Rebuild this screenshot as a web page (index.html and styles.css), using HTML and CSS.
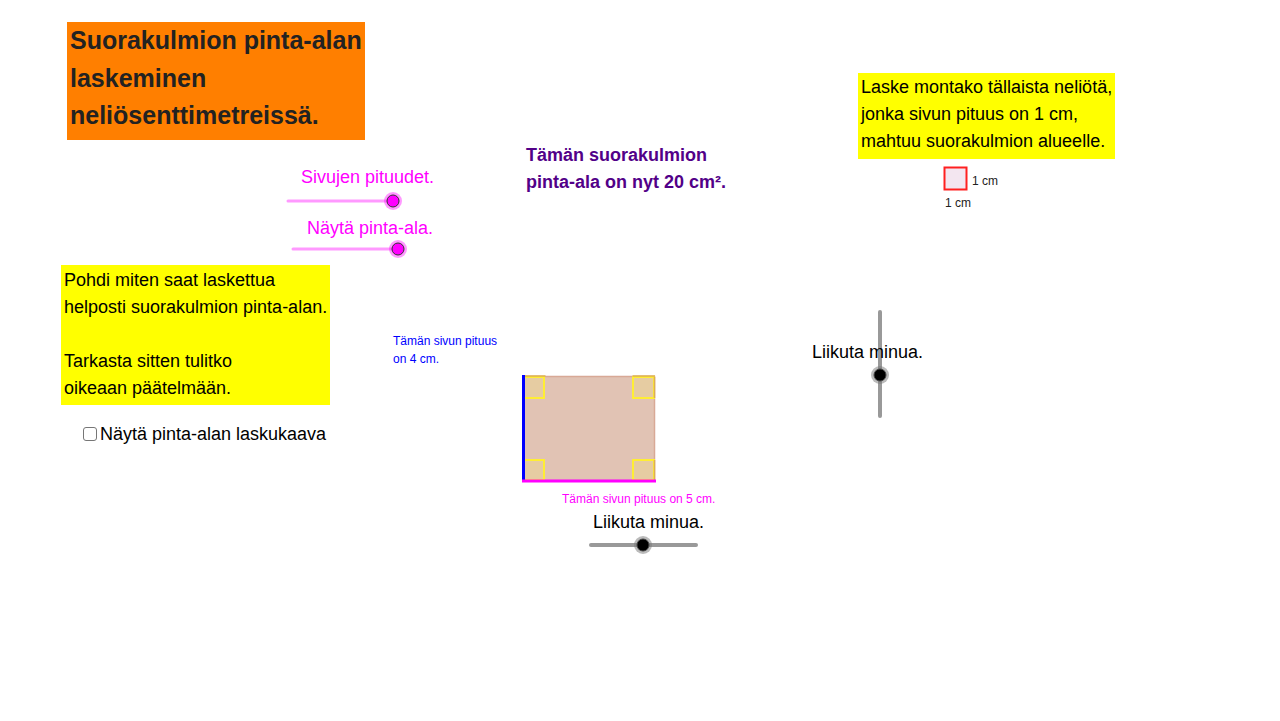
FILE: index.html
```html
<!DOCTYPE html>
<html lang="fi">
<head>
<meta charset="utf-8">
<title>Suorakulmion pinta-ala</title>
<link rel="stylesheet" href="styles.css">
</head>
<body>
<div class="canvas">
  <svg class="drawing" width="1280" height="721" viewBox="0 0 1280 721">
    <!-- pink sliders -->
    <line x1="288" y1="201" x2="393" y2="201" stroke="#ff99ff" stroke-width="3" stroke-linecap="round"/>
    <circle cx="393" cy="201" r="9" fill="#ff00ff" fill-opacity="0.4"/>
    <circle cx="393" cy="201" r="6" fill="#ff00ff" stroke="#333" stroke-width="1"/>
    <line x1="293" y1="249" x2="398" y2="249" stroke="#ff99ff" stroke-width="3" stroke-linecap="round"/>
    <circle cx="398" cy="249" r="9" fill="#ff00ff" fill-opacity="0.4"/>
    <circle cx="398" cy="249" r="6" fill="#ff00ff" stroke="#333" stroke-width="1"/>

    <!-- rectangle -->
    <rect x="523.5" y="376.5" width="131" height="104" fill="#e1c3b4" stroke="#d8a996" stroke-width="1.5"/>
    <g fill="#e6cca2" stroke="#ffee33" stroke-width="2">
      <rect x="524" y="377" width="20" height="21"/>
      <rect x="633" y="377" width="21" height="21"/>
      <rect x="524" y="460" width="20" height="20"/>
      <rect x="633" y="460" width="21" height="20"/>
    </g>
    <line x1="523.5" y1="376" x2="655" y2="376" stroke="#ddb050" stroke-width="1.5" stroke-dasharray="22 87 23"/>
    <line x1="654.5" y1="377" x2="654.5" y2="480" stroke="#ddb050" stroke-width="1.5" stroke-dasharray="21 62 21"/>
    <line x1="523.5" y1="375" x2="523.5" y2="482" stroke="#0000ff" stroke-width="3"/>
    <line x1="522" y1="481" x2="656" y2="481" stroke="#ff00ff" stroke-width="3"/>

    <!-- small unit square -->
    <rect x="944.5" y="167.5" width="22" height="22" fill="#f3e6f0" stroke="#ff2020" stroke-width="2"/>

    <!-- gray horizontal slider -->
    <line x1="591" y1="545" x2="696" y2="545" stroke="#999999" stroke-width="4" stroke-linecap="round"/>
    <circle cx="643" cy="545" r="9" fill="#777" fill-opacity="0.5"/>
    <circle cx="643" cy="545" r="6" fill="#000" stroke="#444" stroke-width="1"/>

    <!-- gray vertical slider -->
    <line x1="880" y1="312" x2="880" y2="416" stroke="#999999" stroke-width="4" stroke-linecap="round"/>
    <circle cx="880" cy="375" r="9" fill="#777" fill-opacity="0.5"/>
    <circle cx="880" cy="375" r="6" fill="#000" stroke="#444" stroke-width="1"/>
  </svg>

  <div class="title-box">Suorakulmion pinta-alan<br>laskeminen<br>neliösenttimetreissä.</div>

  <div class="label pink lbl-sivut">Sivujen pituudet.</div>
  <div class="label pink lbl-nayta">Näytä pinta-ala.</div>

  <div class="note note-left">Pohdi miten saat laskettua<br>helposti suorakulmion pinta-alan.<br><br>Tarkasta sitten tulitko<br>oikeaan päätelmään.</div>

  <label class="check">
    <span class="box"></span>
    <span class="check-text">Näytä pinta-alan laskukaava</span>
  </label>

  <div class="area-text">Tämän suorakulmion<br>pinta-ala on nyt 20 cm².</div>

  <div class="note note-right">Laske montako tällaista neliötä,<br>jonka sivun pituus on 1 cm,<br>mahtuu suorakulmion alueelle.</div>

  <div class="small unit-a">1 cm</div>
  <div class="small unit-b">1 cm</div>

  <div class="small blue side-4">Tämän sivun pituus<br>on 4 cm.</div>
  <div class="small pink side-5">Tämän sivun pituus on 5 cm.</div>

  <div class="label dark move-h">Liikuta minua.</div>
  <div class="label dark move-v">Liikuta minua.</div>
</div>
</body>
</html>
```

FILE: styles.css
```css
html, body {
  margin: 0;
  padding: 0;
  background: #ffffff;
}

body {
  font-family: "Liberation Sans", Arial, sans-serif;
  color: #000;
}

.canvas {
  position: relative;
  width: 1280px;
  height: 721px;
  overflow: hidden;
  background: #ffffff;
}

.drawing {
  position: absolute;
  left: 0;
  top: 0;
}

.title-box {
  position: absolute;
  left: 67px;
  top: 22px;
  width: 295px;
  height: 118px;
  padding: 0 0 0 3px;
  background: #ff7f00;
  color: #222222;
  font-weight: bold;
  font-size: 25px;
  line-height: 37.5px;
  white-space: nowrap;
}

.label {
  position: absolute;
  font-size: 18px;
  line-height: 22px;
  white-space: nowrap;
}

.pink { color: #ff00ff; }
.dark { color: #000000; }
.blue { color: #0000ff; }

.lbl-sivut { left: 301px; top: 166px; }
.lbl-nayta { left: 307px; top: 217px; }

.note {
  position: absolute;
  background: #ffff00;
  font-size: 18px;
  line-height: 27px;
  white-space: nowrap;
  color: #000;
}

.note-left {
  left: 61px;
  top: 265px;
  width: 266px;
  height: 135px;
  padding: 2px 0 3px 3px;
}

.note-right {
  left: 858px;
  top: 73px;
  width: 254px;
  height: 81px;
  padding: 1px 0 4px 3px;
}

.check {
  position: absolute;
  left: 83px;
  top: 423px;
  display: flex;
  align-items: center;
  gap: 3px;
  font-size: 18px;
  line-height: 22px;
  white-space: nowrap;
}

.check .box {
  flex: none;
  box-sizing: border-box;
  width: 14px;
  height: 14px;
  border: 1.5px solid #767676;
  border-radius: 3px;
  background: #fff;
}

.area-text {
  position: absolute;
  left: 526px;
  top: 142px;
  font-size: 18px;
  font-weight: bold;
  line-height: 27px;
  color: #520088;
  white-space: nowrap;
}

.small {
  position: absolute;
  font-size: 12px;
  line-height: 18px;
  white-space: nowrap;
}

.unit-a { left: 972px; top: 172px; color: #222; }
.unit-b { left: 945px; top: 194px; color: #222; }

.side-4 { left: 393px; top: 332px; }
.side-5 { left: 562px; top: 490px; }

.move-h { left: 593px; top: 511px; }
.move-v { left: 812px; top: 341px; }
```
